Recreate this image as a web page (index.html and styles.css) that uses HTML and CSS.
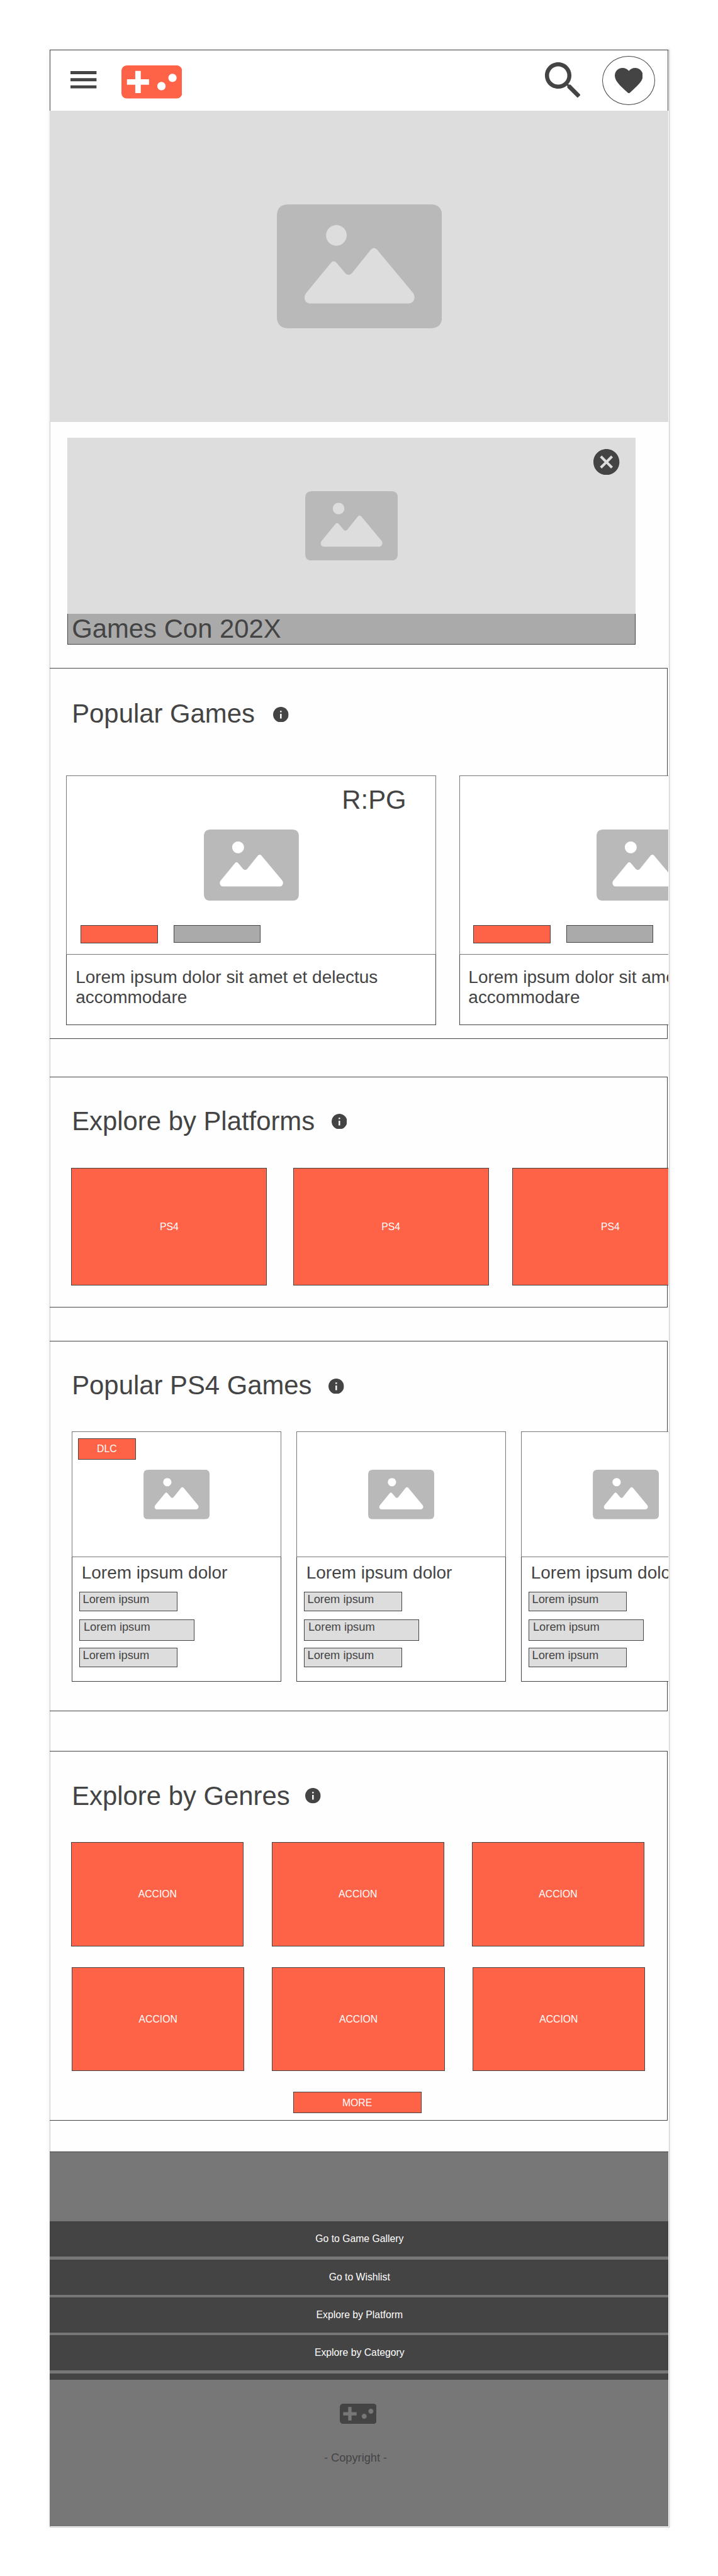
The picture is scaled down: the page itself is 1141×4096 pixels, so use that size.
FILE: index.html
```html
<!DOCTYPE html>
<html lang="en">
<head>
<meta charset="utf-8">
<title>Games Home</title>
<link rel="stylesheet" href="styles.css">
</head>
<body>
<svg class="defs" width="0" height="0" aria-hidden="true">
  <symbol id="picture" viewBox="0 0 400 300">
    <path fill-rule="evenodd" d="M28 0H372Q400 0 400 28V272Q400 300 372 300H28Q0 300 0 272V28Q0 0 28 0ZM144 50a25 25 0 1 0 .1 0ZM71.500 214L131.500 141Q137.500 135 144 141L166.500 167.500Q173 173.500 181 167.500L228 109Q235 102.500 242 109L329.500 214C338 226 331 240 318.500 240H81.500C69 240 62 226 71.500 214Z"/>
  </symbol>
  <symbol id="gamepad" viewBox="1 6 22 12">
    <path d="M21 6H3c-1.100 0-2 .9-2 2v8c0 1.100.9 2 2 2h18c1.100 0 2-.9 2-2V8c0-1.100-.9-2-2-2zm-10 7H8v3H6v-3H3v-2h3V8h2v3h3v2zm4.500 2c-.83 0-1.500-.67-1.500-1.500s.67-1.500 1.500-1.500 1.500.67 1.500 1.500-.67 1.500-1.500 1.500zm4-3c-.83 0-1.500-.67-1.500-1.500S18.670 9 19.500 9s1.500.67 1.500 1.500-.67 1.500-1.500 1.500z"/>
  </symbol>
  <symbol id="info" viewBox="2 2 20 20">
    <path d="M12 2C6.480 2 2 6.480 2 12s4.480 10 10 10 10-4.480 10-10S17.520 2 12 2zm1 15h-2v-6h2v6zm0-8h-2V7h2v2z"/>
  </symbol>
</svg>

<div class="page">
  <header class="topbar">
    <svg class="menu-icon" viewBox="0 0 42 28"><path d="M0 0H42V5H0ZM0 11.500H42V16.500H0ZM0 23H42V28H0Z"/></svg>
    <svg class="logo"><use href="#gamepad"/></svg>
    <svg class="search-icon" viewBox="3 3 17.490 17.490"><path d="M15.500 14h-.79l-.28-.27C15.410 12.590 16 11.110 16 9.500 16 5.910 13.090 3 9.500 3S3 5.910 3 9.500 5.910 16 9.500 16c1.610 0 3.090-.59 4.230-1.570l.27.28v.79l5 4.990L20.490 19l-4.990-5zm-6 0C7.010 14 5 11.990 5 9.500S7.010 5 9.500 5 14 7.010 14 9.500 11.990 14 9.500 14z"/></svg>
    <div class="wishlist">
      <svg class="heart-icon" viewBox="2 3 20 18.350"><path d="M12 21.350l-1.450-1.320C5.400 15.360 2 12.280 2 8.500 2 5.420 4.420 3 7.500 3c1.740 0 3.410.81 4.500 2.090C13.090 3.810 14.760 3 16.500 3 19.580 3 22 5.420 22 8.500c0 3.780-3.400 6.860-8.550 11.540L12 21.350z"/></svg>
    </div>
  </header>

  <div class="hero"><svg class="picture hero-picture"><use href="#picture"/></svg></div>

  <div class="promo">
    <div class="promo-media">
      <svg class="picture promo-picture"><use href="#picture"/></svg>
      <svg class="close" viewBox="2 2 20 20"><path d="M12 2C6.470 2 2 6.470 2 12s4.470 10 10 10 10-4.470 10-10S17.530 2 12 2zm5 13.590L15.590 17 12 13.410 8.410 17 7 15.590 10.590 12 7 8.410 8.410 7 12 10.590 15.590 7 17 8.410 13.410 12 17 15.590z"/></svg>
    </div>
    <div class="promo-caption">Games Con 202X</div>
  </div>

  <section class="section popular">
    <div class="section-head"><h2>Popular Games</h2><svg class="info"><use href="#info"/></svg></div>
    <div class="row">
      <article class="game">
        <div class="game-media">
          <span class="rating">R:PG</span>
          <svg class="picture game-picture"><use href="#picture"/></svg>
          <div class="tags"><span class="tag"></span><span class="tag tag-alt"></span></div>
        </div>
        <div class="game-text">Lorem ipsum dolor sit amet et delectus accommodare</div>
      </article>
      <article class="game">
        <div class="game-media">
          <svg class="picture game-picture"><use href="#picture"/></svg>
          <div class="tags"><span class="tag"></span><span class="tag tag-alt"></span></div>
        </div>
        <div class="game-text">Lorem ipsum dolor sit amet et delectus accommodare</div>
      </article>
    </div>
  </section>

  <section class="section platforms">
    <div class="section-head"><h2>Explore by Platforms</h2><svg class="info"><use href="#info"/></svg></div>
    <div class="row">
      <div class="tile">PS4</div>
      <div class="tile">PS4</div>
      <div class="tile">PS4</div>
    </div>
  </section>

  <section class="section ps4">
    <div class="section-head"><h2>Popular PS4 Games</h2><svg class="info"><use href="#info"/></svg></div>
    <div class="row">
      <article class="card">
        <div class="card-media"><span class="badge">DLC</span><svg class="picture card-picture"><use href="#picture"/></svg></div>
        <div class="card-body"><h3>Lorem ipsum dolor</h3><span class="pill">Lorem ipsum</span><span class="pill pill-wide">Lorem ipsum</span><span class="pill pill-last">Lorem ipsum</span></div>
      </article>
      <article class="card">
        <div class="card-media"><svg class="picture card-picture"><use href="#picture"/></svg></div>
        <div class="card-body"><h3>Lorem ipsum dolor</h3><span class="pill">Lorem ipsum</span><span class="pill pill-wide">Lorem ipsum</span><span class="pill pill-last">Lorem ipsum</span></div>
      </article>
      <article class="card">
        <div class="card-media"><svg class="picture card-picture"><use href="#picture"/></svg></div>
        <div class="card-body"><h3>Lorem ipsum dolor</h3><span class="pill">Lorem ipsum</span><span class="pill pill-wide">Lorem ipsum</span><span class="pill pill-last">Lorem ipsum</span></div>
      </article>
    </div>
  </section>

  <section class="section genres">
    <div class="section-head"><h2>Explore by Genres</h2><svg class="info"><use href="#info"/></svg></div>
    <div class="genre-row">
      <div class="genre">ACCION</div><div class="genre">ACCION</div><div class="genre">ACCION</div>
    </div>
    <div class="genre-row genre-row-second">
      <div class="genre">ACCION</div><div class="genre">ACCION</div><div class="genre">ACCION</div>
    </div>
    <div class="more">MORE</div>
  </section>

  <footer class="footer">
    <nav class="links">
      <a>Go to Game Gallery</a>
      <a>Go to Wishlist</a>
      <a>Explore by Platform</a>
      <a>Explore by Category</a>
      <span class="links-end"></span>
    </nav>
    <svg class="footer-logo"><use href="#gamepad"/></svg>
    <p class="copyright">- Copyright -</p>
  </footer>
</div>
</body>
</html>
```
FILE: styles.css
```css
:root {
  font-size: 9.846px;
  --ink: #444;
  --mid: #777;
  --soft: #ddd;
  --accent: #ff6347;
}

*, *::before, *::after { box-sizing: border-box; }

body {
  margin: 0;
  padding: 8rem 0 0 8rem;
  background: #fff;
  color: var(--ink);
  font-family: "Liberation Sans", Arial, sans-serif;
  font-size: 1.6rem;
}

h2, h3, p { margin: 0; font-weight: 400; }
svg { display: block; flex: none; fill: var(--ink); }
.defs { position: absolute; }

.page {
  width: 100.1rem;
  height: 400.2rem;
  background: #fefefe;
  box-shadow: inset 0 0 0 1px #ccc, 0 0 5px rgba(0, 0, 0, .12);
}

/* Top bar */
.topbar {
  display: flex;
  align-items: flex-start;
  width: 99.9rem;
  height: 9.9rem;
  padding: 0 2.1rem 0 3.3rem;
  background: #fff;
  border: 1px solid var(--ink);
  border-bottom: 0;
}
.menu-icon { width: 4.2rem; height: 2.8rem; margin-top: 3.4rem; }
.logo { width: 9.8rem; height: 5.35rem; margin: 2.5rem 0 0 4rem; fill: var(--accent); }
.search-icon { width: 5.75rem; height: 5.75rem; margin: 1.97rem 3.53rem 0 auto; }
.wishlist {
  display: flex;
  justify-content: center;
  align-items: center;
  width: 8.5rem;
  height: 8rem;
  margin-top: .9rem;
  border: 1px solid var(--ink);
  border-radius: 50%;
}
.heart-icon { width: 4.54rem; height: 4.16rem; }

/* Picture placeholders */
.picture { fill: #b9b9b9; }
.hero {
  display: flex;
  justify-content: center;
  align-items: center;
  width: 99.9rem;
  height: 50.2rem;
  padding-left: .1rem;
  background: var(--soft);
}
.hero-picture { width: 26.66rem; height: 20rem; }

/* Promo banner */
.promo { width: 91.7rem; margin: 2.6rem 0 3.8rem 2.9rem; }
.promo-media {
  position: relative;
  display: flex;
  justify-content: center;
  align-items: center;
  height: 28.4rem;
  background: var(--soft);
}
.promo-picture { width: 14.95rem; height: 11.2rem; }
.close { position: absolute; top: 1.81rem; right: 2.6rem; width: 4.2rem; height: 4.2rem; }
.promo-caption {
  height: 5rem;
  padding-left: .6rem;
  border: 1px solid var(--ink);
  border-top: 0;
  background: #aaa;
  font-size: 4.25rem;
  line-height: 4.8rem;
}

/* Sections */
.section {
  width: 99.8rem;
  border: 1px solid var(--ink);
  border-left: 0;
}
.section-head {
  display: flex;
  align-items: flex-start;
  height: 14.6rem;
  padding: 4.7rem 0 0 3.6rem;
}
.section-head h2 { font-size: 4.25rem; line-height: 4.8rem; white-space: nowrap; }
.info { width: 2.5rem; height: 2.5rem; margin: 1.15rem 0 0 2.7rem; }
.row { display: flex; margin-right: -2px; overflow: hidden; }

/* Popular games */
.popular { height: 59.9rem; margin-bottom: 6.1rem; }
.popular .section-head { height: 17.2rem; padding-top: 4.8rem; }
.popular .info { margin: 1.33rem 0 0 3rem; }
.popular .row { gap: 3.7rem; margin-left: 2.7rem; }
.game { flex: none; width: 59.7rem; background: #fff; }
.game-media {
  position: relative;
  display: flex;
  justify-content: center;
  align-items: center;
  height: 29rem;
  border: 1px solid var(--mid);
}
.game-picture { width: 15.33rem; height: 11.5rem; }
.rating { position: absolute; top: 1.42rem; left: 44.38rem; font-size: 4.25rem; line-height: 4.8rem; }
.tags { position: absolute; top: 24.1rem; left: 2.2rem; display: flex; gap: 2.5rem; }
.tag { width: 12.5rem; height: 2.9rem; border: 1px solid var(--ink); background: var(--accent); }
.tag-alt { width: 14rem; height: 2.8rem; background: #aaa; }
.game-text {
  height: 11.4rem;
  padding: 1.96rem 1.4rem 0;
  border: 1px solid var(--ink);
  border-top: 0;
  font-size: 2.84rem;
  line-height: 3.3rem;
}

/* Platforms */
.platforms { height: 37.3rem; margin-bottom: 5.3rem; }
.platforms .row { gap: 3.8rem; margin-left: 3.5rem; }
.tile, .genre, .more, .badge {
  display: flex;
  justify-content: center;
  align-items: center;
  border: 1px solid var(--ink);
  background: var(--accent);
  color: #fff;
}
.tile, .genre, .more { padding-top: .1rem; }
.tile { flex: none; width: 31.6rem; height: 19rem; }
.tile:first-child { margin-right: .4rem; }

/* PS4 games */
.ps4 { height: 59.9rem; margin-bottom: 6.4rem; }
.ps4 .row { gap: 2.46rem; margin-left: 3.6rem; }
.ps4 .info { margin-top: 1.3rem; }
.card { flex: none; width: 33.8rem; background: #fff; }
.card-media {
  position: relative;
  display: flex;
  justify-content: center;
  align-items: center;
  height: 20.3rem;
  border: 1px solid var(--mid);
}
.card-picture { width: 10.68rem; height: 8rem; }
.badge { position: absolute; top: 1rem; left: .9rem; width: 9.3rem; height: 3.4rem; }
.card-body {
  display: flex;
  flex-direction: column;
  align-items: flex-start;
  height: 20.1rem;
  padding: .9rem 0 0 1.1rem;
  border: 1px solid var(--ink);
  border-top: 0;
}
.card-body h3 { margin: 0 0 1.4rem .38rem; font-size: 2.84rem; line-height: 3.3rem; }
.pill {
  width: 15.8rem;
  height: 3.1rem;
  padding-left: .45rem;
  border: 1px solid var(--ink);
  background: var(--soft);
  font-size: 1.86rem;
  line-height: 2.15rem;
}
.pill-wide { width: 18.6rem; height: 3.5rem; margin: 1.3rem 0 1.1rem; padding-left: .6rem; }
.pill-last { height: 3.2rem; }

/* Genres */
.genres { height: 59.7rem; margin-bottom: 5rem; }
.genres .info { margin-left: 2.5rem; }
.genre-row { display: flex; gap: 4.48rem; margin-left: 3.5rem; }
.genre-row-second { gap: 4.48rem; margin: 3.4rem 0 3.3rem 3.59rem; }
.genre { width: 27.85rem; height: 16.8rem; }
.more { width: 20.7rem; height: 3.5rem; margin-left: 39.3rem; }

/* Footer */
.footer {
  display: flex;
  flex-direction: column;
  align-items: center;
  width: 99.9rem;
  height: 60.5rem;
  padding-top: 11.1rem;
  border-top: 1px solid var(--ink);
  background: var(--mid);
}
.links { align-self: stretch; color: #fff; }
.links a {
  display: flex;
  justify-content: center;
  align-items: center;
  height: 5.7rem;
  margin-bottom: .4rem;
  padding: .08rem 0 0 .15rem;
  background: var(--ink);
}
.links a:first-child, .links a:nth-child(4) { margin-bottom: .5rem; }
.links-end { display: block; height: 1rem; background: var(--ink); }
.footer-logo { width: 5.97rem; height: 3.26rem; margin: 3.9rem .3rem 4.43rem 0; }
.copyright { margin-right: 1.12rem; font-size: 1.85rem; line-height: 2.1rem; }
```
